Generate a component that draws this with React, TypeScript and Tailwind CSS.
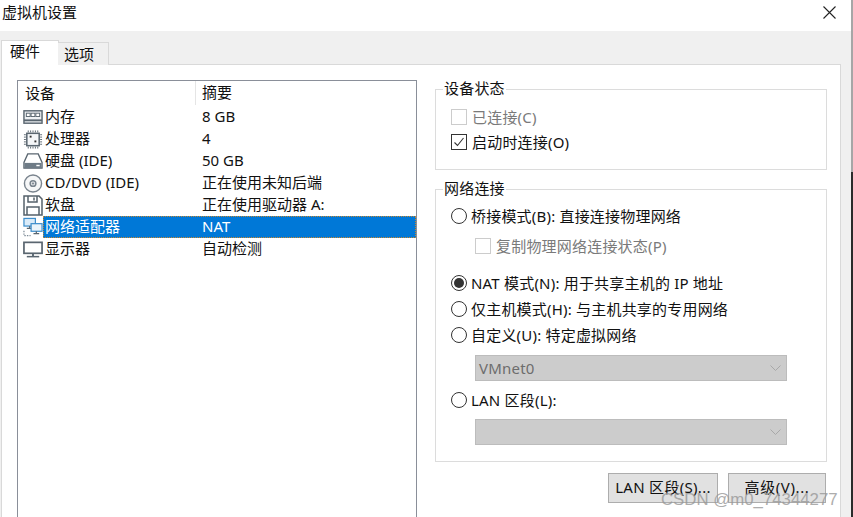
const CJK = "font-['Noto_Sans','Noto_Sans_CJK_SC',sans-serif]";

function MemIcon() {
  return (
    <svg width="21" height="16" viewBox="0 0 21 16" fill="none" stroke="#5a6670">
      <rect x="1" y="1.500" width="19" height="13" fill="#eef1f4" strokeWidth="1.500" />
      <rect x="3.500" y="4" width="4" height="3.500" fill="#fff" strokeWidth="1" />
      <rect x="8.500" y="4" width="4" height="3.500" fill="#fff" strokeWidth="1" />
      <rect x="13.500" y="4" width="4" height="3.500" fill="#fff" strokeWidth="1" />
      <path d="M1 11.500h19" strokeWidth="2" />
    </svg>
  );
}
function CpuIcon() {
  return (
    <svg width="21" height="21" viewBox="0 0 21 21" fill="none" stroke="#5a6670">
      <rect x="4" y="4" width="13" height="13" fill="#f4f6f8" strokeWidth="1.600" />
      <path d="M5.500 1v2M8 1v2M10.500 1v2M13 1v2M15.500 1v2M5.500 18v2M8 18v2M10.500 18v2M13 18v2M15.500 18v2M1 5.500h2M1 8h2M1 10.500h2M1 13h2M1 15.500h2M18 5.500h2M18 8h2M18 10.500h2M18 13h2M18 15.500h2" />
      <rect x="7" y="6.500" width="2" height="2" fill="#333" stroke="none" />
      <rect x="12" y="11.500" width="2" height="2" fill="#333" stroke="none" />
    </svg>
  );
}
function DiskIcon() {
  return (
    <svg width="21" height="18" viewBox="0 0 21 18" fill="none" stroke="#5a6670" strokeWidth="1.400">
      <path d="M5 1.500h11l4 9v6H1v-6z" fill="#fff" />
      <rect x="1.500" y="11" width="18" height="5.500" fill="#6f7c87" stroke="none" />
      <rect x="14" y="13" width="3.500" height="1.500" fill="#fff" stroke="none" />
    </svg>
  );
}
function CdIcon() {
  return (
    <svg width="21" height="21" viewBox="0 0 21 21" fill="none" stroke="#7a848e">
      <circle cx="10.500" cy="10.500" r="9" fill="#f6f7f8" strokeWidth="1.500" />
      <circle cx="10.500" cy="10.500" r="3" strokeWidth="1.600" />
      <circle cx="10.500" cy="10.500" r="0.800" fill="#7a848e" />
    </svg>
  );
}
function FloppyIcon() {
  return (
    <svg width="20" height="21" viewBox="0 0 20 21" fill="none" stroke="#56616b" strokeWidth="1.500">
      <path d="M1 1h15l3 3v16H1z" fill="#fff" />
      <path d="M5 1v6h9V1M11 2.500v3M4 20v-8h12v8" />
    </svg>
  );
}
function NetIcon() {
  return (
    <svg width="21" height="20" viewBox="0 0 21 20" fill="none" stroke="#3f8fcc" strokeWidth="1.300">
      <rect x="1" y="1" width="12" height="8" fill="#dcecf9" />
      <path d="M7 9v2M4 11.500h6" stroke="#5a6670" />
      <rect x="8.500" y="6.500" width="11.500" height="8" fill="#eaf4fb" />
      <path d="M14 14.500v2M11 17h6" stroke="#5a6670" />
      <path d="M1 14v5h7" stroke="#7d8a96" strokeDasharray="1.500 1.200" />
    </svg>
  );
}
function MonitorIcon() {
  return (
    <svg width="21" height="17" viewBox="0 0 21 17" fill="none" stroke="#5a6670" strokeWidth="1.800">
      <rect x="1" y="1" width="19" height="11.500" fill="#fff" />
      <path d="M10.500 13v2.500" strokeWidth="2" />
      <path d="M4 16h13" strokeWidth="1.600" />
    </svg>
  );
}

const devices = [
  { icon: <MemIcon />, name: "内存", value: "8 GB" },
  { icon: <CpuIcon />, name: "处理器", value: "4" },
  { icon: <DiskIcon />, name: "硬盘 (IDE)", value: "50 GB" },
  { icon: <CdIcon />, name: "CD/DVD (IDE)", value: "正在使用未知后端" },
  { icon: <FloppyIcon />, name: "软盘", value: "正在使用驱动器 A:" },
  { icon: <NetIcon />, name: "网络适配器", value: "NAT", selected: true },
  { icon: <MonitorIcon />, name: "显示器", value: "自动检测" },
];

function Radio({ checked }: { checked?: boolean }) {
  return (
    <span className="flex h-[16px] w-[16px] shrink-0 items-center justify-center rounded-full border border-[#333] bg-white">
      {checked && <span className="h-[10px] w-[10px] rounded-full bg-[#333]" />}
    </span>
  );
}
function Check({ checked, disabled }: { checked?: boolean; disabled?: boolean }) {
  return (
    <span className={`flex h-[16px] w-[16px] shrink-0 items-center justify-center border ${disabled ? "border-[#ccc]" : "border-[#333]"} bg-white`}>
      {checked && (
        <svg width="12" height="12" viewBox="0 0 12 12" fill="none" stroke="#333" strokeWidth="1.100">
          <path d="M1.500 6.500l3 3 6-7.500" />
        </svg>
      )}
    </span>
  );
}
function Chevron() {
  return (
    <svg width="11" height="7" viewBox="0 0 11 7" fill="none" stroke="#a8a8a8">
      <path d="M0.500 0.500l5 5 5-5" />
    </svg>
  );
}
function Select({ value, className }: { value?: string; className: string }) {
  return (
    <div className={`flex h-[26px] w-[312px] items-center justify-between border border-[#bcbcbc] bg-[#cccccc] pl-[3px] pr-[5px] text-[#6d6d6d] ${className}`}>
      <span>{value}</span>
      <Chevron />
    </div>
  );
}
function Group({ title, className, children }: { title: string; className: string; children: React.ReactNode }) {
  return (
    <fieldset className={`w-[392px] border border-[#dcdcdc] pl-[15px] ${className}`}>
      <legend className="-ml-[8px] px-[1px] pb-[2px] leading-[16px]">{title}</legend>
      {children}
    </fieldset>
  );
}

export default function App() {
  return (
    <div className={`relative flex h-[517px] w-[853px] flex-col overflow-hidden bg-[#f0f0f0] pr-[2px] text-[15px] leading-[22px] text-[#111] ${CJK}`}>
      <header className="flex h-[31px] shrink-0 items-center justify-between bg-white pl-[2px] pr-[15px]">
        <span className="-mt-[7px]">虚拟机设置</span>
        <svg width="13" height="13" viewBox="0 0 13 13" stroke="#222" strokeWidth="1.100" className="-mt-[6px]">
          <path d="M0.500 0.500l12 12M12.500 0.500l-12 12" />
        </svg>
      </header>

      <nav className="relative z-10 mt-[9px] flex h-[25px] shrink-0 items-end pl-[1px]">
        <div className="flex h-[25px] w-[58px] items-center border border-b-0 border-[#d9d9d9] bg-white pb-[5px] pl-[8px]">硬件</div>
        <div className="-ml-[1px] flex h-[23px] w-[51px] items-center border border-b-0 border-l-0 border-[#d9d9d9] bg-[#f0f0f0] pl-[6px]">选项</div>
      </nav>

      <main className="-mt-[1px] ml-[1px] flex w-[840px] flex-1 items-start border border-b-0 border-[#d9d9d9] bg-white pl-[15px] pt-[15px]">
        <section className="h-[450px] w-[400px] shrink-0 border border-[#8a8f99] bg-white">
          <div className="flex h-[25px] items-center pb-[1px]">
            <span className="w-[177px] pl-[7px]">设备</span>
            <span className="h-[24px] border-l border-[#e5e5e5] pl-[6px]">摘要</span>
          </div>
          <ul>
            {devices.map((d) => (
              <li key={d.name} className="flex h-[22px] items-center">
                <span className="flex w-[25px] shrink-0 justify-start pl-[5px]">{d.icon}</span>
                <div className={`flex h-[22px] flex-1 items-center pb-[2px] ${d.selected ? "border border-dotted border-[#c9882f] bg-[#0078d7] text-white" : "pl-[1px] pr-[1px]"}`}>
                  <span className="w-[158px] shrink-0 pl-[1px]">{d.name}</span>
                  <span>{d.value}</span>
                </div>
              </li>
            ))}
          </ul>
        </section>

        <section className="ml-[18px] flex flex-col tracking-[0.2px]">
          <Group title="设备状态" className="h-[90px]">
            <label className="mt-[6px] flex h-[26px] items-center gap-[5px] text-[#7a7a7a]">
              <Check disabled />
              已连接(C)
            </label>
            <label className="mt-[-1px] flex h-[26px] items-center gap-[5px]">
              <Check checked />
              启动时连接(O)
            </label>
          </Group>

          <Group title="网络连接" className="mt-[10px] h-[282px]">
            <label className="mt-[5px] flex h-[26px] items-center gap-[4px]">
              <Radio />
              桥接模式(B): 直接连接物理网络
            </label>
            <label className="ml-[24px] mt-[4px] flex h-[26px] items-center gap-[5px] text-[#7a7a7a]">
              <Check disabled />
              复制物理网络连接状态(P)
            </label>
            <label className="mt-[11px] flex h-[26px] items-center gap-[4px]">
              <Radio checked />
              NAT 模式(N): 用于共享主机的 IP 地址
            </label>
            <label className="flex h-[26px] items-center gap-[4px]">
              <Radio />
              仅主机模式(H): 与主机共享的专用网络
            </label>
            <label className="flex h-[26px] items-center gap-[4px]">
              <Radio />
              自定义(U): 特定虚拟网络
            </label>
            <Select value="VMnet0" className="ml-[24px] mt-[7px]" />
            <label className="mt-[6px] flex h-[26px] items-center gap-[4px]">
              <Radio />
              LAN 区段(L):
            </label>
            <Select className="ml-[24px] mt-[6px]" />
          </Group>

          <div className="mt-[11px] flex w-[392px] justify-end gap-[10px] pr-[1px]">
            <button className="h-[30px] w-[110px] border border-[#adadad] bg-[#e1e1e1] pb-[2px] tracking-[0.3px]">LAN 区段(S)...</button>
            <button className="h-[30px] w-[98px] border border-[#adadad] bg-[#e1e1e1] pb-[2px] tracking-[0.6px]">高级(V)...</button>
          </div>
        </section>
      </main>

      <div className="absolute right-0 top-0 flex h-[517px] w-[2px] flex-col">
        <div className="h-[172px] bg-[#a6a6a6]" />
        <div className="flex-1 bg-[#2b2b2b]" />
      </div>

      <div className="pointer-events-none absolute left-[661px] top-[490px] text-[16.8px] leading-[20px] text-[#999] opacity-80 font-['Liberation_Sans',sans-serif]">
        CSDN @m0_74344277
      </div>
    </div>
  );
}
